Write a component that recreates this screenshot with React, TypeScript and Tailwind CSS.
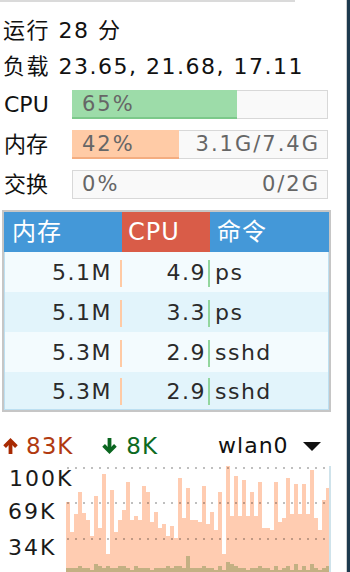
import React from 'react';

const font = "font-['DejaVu_Sans','Noto_Sans_CJK_SC',sans-serif]";

// top y (px) of each upload bar and download bar, bottom of chart is y=578
const upTops = [502, 532, 514, 492, 513, 520, 536, 496, 528, 474, 554, 490, 532, 520, 510, 482, 520, 516, 520, 486, 492, 522, 512, 528, 524, 536, 526, 538, 478, 518, 488, 520, 520, 522, 486, 524, 512, 530, 492, 554, 466, 516, 476, 516, 480, 516, 492, 516, 482, 528, 528, 530, 482, 522, 518, 478, 514, 484, 514, 484, 514, 470, 518, 530, 500, 488];
const downTops = [568, 568, 568, 566, 568, 568, 570, 564, 566, 568, 566, 568, 568, 566, 566, 568, 570, 566, 568, 568, 568, 570, 568, 568, 568, 566, 568, 566, 566, 568, 556, 568, 568, 568, 566, 568, 568, 570, 566, 570, 562, 564, 566, 568, 568, 570, 568, 568, 566, 568, 568, 570, 566, 570, 568, 566, 570, 564, 570, 566, 570, 564, 568, 570, 568, 566];

const meters = [
    { label: 'CPU', pct: 65, fill: 'bg-[#9ddca9] border-b-2 border-[#7cc98a]', right: '' },
    { label: '内存', pct: 42, fill: 'bg-[#ffcba6] border-b-2 border-[#f4ad80]', right: '3.1G/7.4G' },
    { label: '交换', pct: 0, fill: '', right: '0/2G' },
];

const procs = [
    { mem: '5.1M', cpu: '4.9', cmd: 'ps' },
    { mem: '5.1M', cpu: '3.3', cmd: 'ps' },
    { mem: '5.3M', cpu: '2.9', cmd: 'sshd' },
    { mem: '5.3M', cpu: '2.9', cmd: 'sshd' },
];

const UpArrow = ({ color }: { color: string }) => (
    <svg width="15" height="16" viewBox="0 0 15 16">
        <polyline points="1.6,8.6 7.5,2.7 13.4,8.6" fill="none" stroke={color} strokeWidth="3.8" />
        <line x1="7.5" y1="3" x2="7.5" y2="16" stroke={color} strokeWidth="3.8" />
    </svg>
);

const DownArrow = ({ color }: { color: string }) => (
    <svg width="15" height="16" viewBox="0 0 15 16">
        <polyline points="1.6,7.4 7.5,13.3 13.4,7.4" fill="none" stroke={color} strokeWidth="3.8" />
        <line x1="7.5" y1="0" x2="7.5" y2="13" stroke={color} strokeWidth="3.8" />
    </svg>
);

const App: React.FC = () => {
    return (
        <div className={`w-[350px] h-[572px] overflow-hidden flex bg-white text-[#111] ${font}`}>
            <div className="w-[346px] shrink-0">
                <div className="h-[2px] w-[295px] bg-[#dadada]" />

                {/* uptime / load */}
                <div className="mt-[11px] pl-[3px] text-[22px] leading-[36px] tracking-[1.5px] whitespace-nowrap">
                    <div>运行 28 分</div>
                    <div>负载 23.65, 21.68, 17.11</div>
                </div>

                {/* meters */}
                <div className="mt-[5px] flex flex-col gap-[11px]">
                    {meters.map((m) => (
                        <div key={m.label} className="flex items-center h-[29px]">
                            <div className="w-[72px] pl-[4px] text-[22px] leading-none">{m.label}</div>
                            <div className="relative w-[256px] h-[29px] border border-[#d8d8d8] bg-[#f9f9f9]">
                                {m.pct > 0 && (
                                    <div className={`absolute -left-px -top-px -bottom-px ${m.fill}`} style={{ width: `${m.pct}%` }} />
                                )}
                                <div className="relative h-full flex items-center justify-between pl-[9px] pr-[7px] text-[21px] leading-none tracking-[2px] text-[#666]">
                                    <span>{m.pct}%</span>
                                    <span>{m.right}</span>
                                </div>
                            </div>
                        </div>
                    ))}
                </div>

                {/* process table */}
                <div className="mt-[11px] ml-[2px] w-[329px] border-2 border-[#c6c6c6]">
                    <div className="grid grid-cols-[118px_88px_1fr] h-[40px] text-white text-[24px] leading-none tracking-[1px]">
                        <div className="bg-[#4498d8] flex items-center pl-[8px]">内存</div>
                        <div className="bg-[#d95c48] flex items-center pl-[6px]">CPU</div>
                        <div className="bg-[#4498d8] flex items-center pl-[7px]">命令</div>
                    </div>
                    <div className="border-x border-b border-[#bcdff1] text-[22px] leading-none tracking-[1.5px] text-[#2a2a2a]">
                        {procs.map((p, i) => (
                            <div
                                key={i}
                                className={`grid grid-cols-[117px_88px_1fr] ${i === 3 ? 'h-[37px]' : 'h-[40px]'} ${i % 2 === 0 ? 'bg-[#f3fbfe]' : 'bg-[#e2f4fb]'}`}
                            >
                                <div className="flex items-center justify-end pt-[2px]">
                                    <span>{p.mem}</span>
                                    <div className="w-[2px] h-[27px] ml-[8px] bg-[#ffcaa4]" />
                                </div>
                                <div className="flex items-center justify-end pt-[2px]">
                                    <span>{p.cpu}</span>
                                    <div className="w-[2px] h-[27px] ml-[2px] bg-[#92d69e]" />
                                </div>
                                <div className="flex items-center pl-[5px] pt-[2px]">{p.cmd}</div>
                            </div>
                        ))}
                    </div>
                </div>

                {/* network */}
                <div className="mt-[16px] h-[36px] flex items-center pl-[3px] text-[23px] leading-none tracking-[1px]">
                    <UpArrow color="#a82a02" />
                    <span className="ml-[8px] text-[#b13a10]">83K</span>
                    <span className="ml-[29px]"><DownArrow color="#0b6620" /></span>
                    <span className="ml-[9px] text-[#0d6a22]">8K</span>
                    <span className="ml-[60px] text-[22px] text-[#111]">wlan0</span>
                    <div className="ml-[14px] w-0 h-0 border-l-[9px] border-r-[9px] border-t-[9px] border-l-transparent border-r-transparent border-t-[#111]" />
                </div>

                {/* chart */}
                <div className="relative mt-[2px] h-[112px]">
                    <div className="flex items-end h-full ml-[66px]">
                        {upTops.map((t, i) => (
                            <div
                                key={i}
                                className={`${i === upTops.length - 1 ? 'w-[3px]' : 'w-[4px]'} flex flex-col justify-end bg-[#ffccb1]`}
                                style={{ height: 578 - t }}
                            >
                                <div className="bg-[#c3b083]" style={{ height: 578 - downTops[i] }} />
                            </div>
                        ))}
                        <div className="w-[2px] h-full bg-[#cfe3eb]" />
                    </div>
                    {[1, 36, 72].map((y) => (
                        <div
                            key={y}
                            className="absolute left-[67px] w-[262px] h-[2px] bg-[repeating-linear-gradient(to_right,rgba(0,0,0,0.25)_0_2px,transparent_2px_8px)]"
                            style={{ top: y }}
                        />
                    ))}
                    <div className="absolute left-[9px] top-[2px] text-[22px] leading-none tracking-[2px] text-[#1a1a1a]">100K</div>
                    <div className="absolute left-[8px] top-[35px] text-[22px] leading-none tracking-[2px] text-[#1a1a1a]">69K</div>
                    <div className="absolute left-[8px] top-[71px] text-[22px] leading-none tracking-[2px] text-[#1a1a1a]">34K</div>
                </div>
            </div>
            <div className="w-[1px] bg-[#cdcdcd]" />
            <div className="w-[3px] bg-[#1d3a4e]" />
        </div>
    );
};

export default App;
